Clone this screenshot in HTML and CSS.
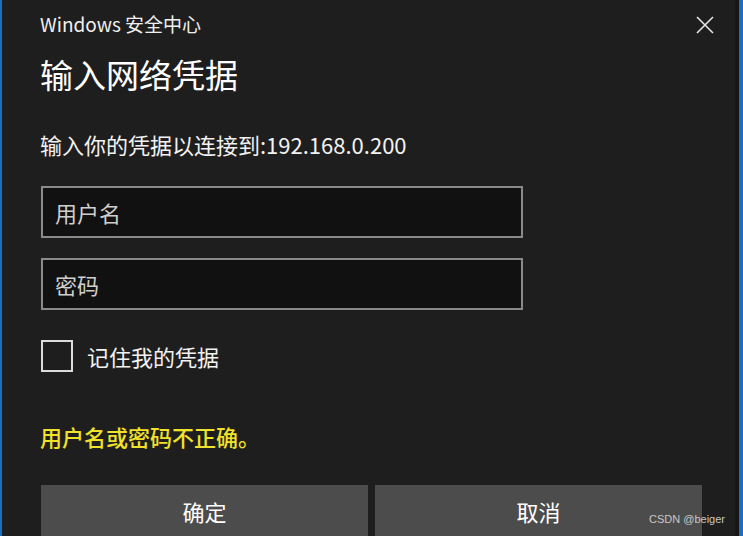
FILE: index.html
```html
<!DOCTYPE html>
<html lang="zh-CN">
<head>
    <meta charset="UTF-8">
    <meta name="viewport" content="width=device-width, initial-scale=1.0">
    <title>Windows 安全中心</title>
    <link rel="stylesheet" href="styles.css">
</head>
<body>
    <div class="dialog">
        <div class="titlebar">
            <span class="app-name">Windows 安全中心</span>
            <span class="close">
                <svg width="18" height="18" viewBox="0 0 18 18">
                    <path d="M1 1 L17 17 M17 1 L1 17" stroke="#e6e6e6" stroke-width="1.6" fill="none"/>
                </svg>
            </span>
        </div>

        <h1>输入网络凭据</h1>
        <p class="prompt">输入你的凭据以连接到:192.168.0.200</p>

        <div class="field">用户名</div>
        <div class="field">密码</div>

        <label class="remember">
            <span class="box"></span>
            <span>记住我的凭据</span>
        </label>

        <p class="error">用户名或密码不正确。</p>

        <div class="buttons">
            <div class="btn">确定</div>
            <div class="btn">取消</div>
        </div>

        <span class="watermark">CSDN @beiger</span>
    </div>
</body>
</html>
```

FILE: styles.css
```css
html, body {
    margin: 0;
    padding: 0;
    height: 100%;
    background: #1f1e1e;
    overflow: hidden;
}
body {
    font-family: "Noto Sans CJK SC", "Noto Sans", sans-serif;
    color: #f2f2f2;
}
.dialog {
    position: relative;
    box-sizing: border-box;
    width: 743px;
    height: 536px;
    padding: 0 30px 0 40px;
    border-left: 2px solid #1a6fc4;
    border-right: 4px solid #1a6fc4;
    box-shadow: inset -4px 0 0 #181616;
}
.titlebar {
    display: flex;
    justify-content: space-between;
    align-items: center;
    height: 46px;
    margin-left: -2px;
}
.app-name {
    font-size: 19px;
    color: #f0f0f0;
}
.close {
    display: flex;
    margin-right: -5px;
    margin-top: 3px;
}
h1 {
    margin: 7px 0 0 -2px;
    font-size: 33px;
    font-weight: normal;
    line-height: 42px;
    color: #ffffff;
}
.prompt {
    margin: 34px 0 0 -2px;
    font-size: 22px;
    line-height: 30px;
}
.field {
    box-sizing: border-box;
    width: 482px;
    height: 52px;
    margin-top: 27px;
    margin-left: -1px;
    padding: 0 12px;
    border: 2px solid #8a8a8a;
    background: #121111;
    color: #cfcfcf;
    font-size: 22px;
    line-height: 48px;
}
.field + .field {
    margin-top: 20px;
}
.remember {
    display: flex;
    align-items: center;
    gap: 14px;
    margin-top: 30px;
    margin-left: -1px;
    font-size: 22px;
    line-height: 32px;
}
.box {
    box-sizing: border-box;
    width: 32px;
    height: 32px;
    border: 2px solid #dcdcdc;
}
.error {
    margin: 49px 0 0 -2px;
    font-size: 22px;
    font-weight: 500;
    line-height: 30px;
    color: #f0e22a;
}
.buttons {
    display: flex;
    gap: 7px;
    margin-top: 34px;
    margin-left: -1px;
}
.btn {
    flex: 0 0 327px;
    height: 60px;
    background: #4d4c4c;
    color: #ffffff;
    font-size: 22px;
    text-align: center;
    line-height: 52px;
}
.watermark {
    position: absolute;
    right: 14px;
    bottom: 11px;
    font-family: "Liberation Sans", Arial, sans-serif;
    font-size: 11px;
    color: #c8c8c8;
}
```
